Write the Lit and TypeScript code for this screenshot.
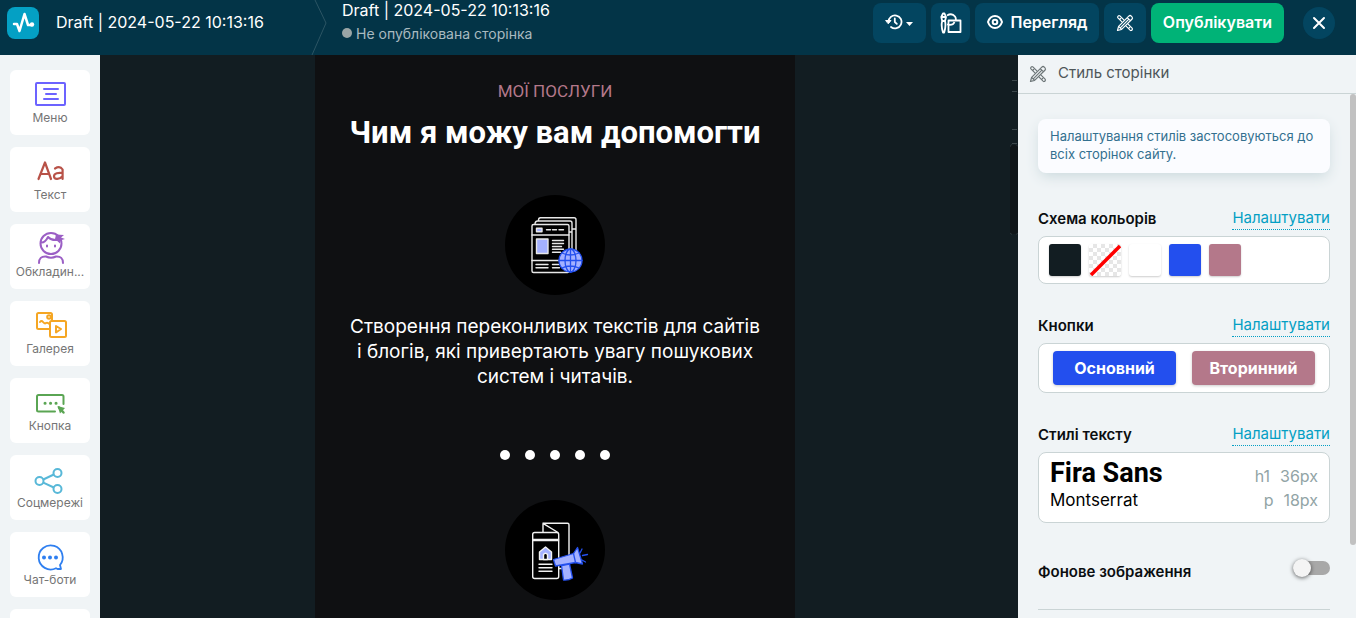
import { LitElement, html, css, svg } from "lit";
import { customElement, property } from "lit/decorators.js";

const toolsIcon = html`<svg width="18" height="18" viewBox="0 0 18 18" fill="none" stroke="currentColor" stroke-width="1.2" stroke-linejoin="round" aria-hidden="true">
  <path d="M6.200 8.100 1.900 3.900Q1.200 3 2.100 2.100T3.900 1.900L8.100 6.200M11.800 9.900l4.300 4.200q.8.900-.1 1.900t-1.900.1L9.900 11.800M3.700 5.500l1.300-1.300M12.700 14.500l1.300-1.300"/>
  <path d="M1.500 16.500 2.600 12.400 12.800 2.100q1.300-1.200 2.500 0l.7.7q1.100 1.200-.1 2.500L5.600 15.400zM11.300 3.700l3 3M2.600 12.400l3 3M4.300 13.800l8.600-8.600"/>
</svg>`;

const icons: Record<string, unknown> = {
  menu: svg`<g fill="none" stroke="#6c63ff" stroke-width="2" stroke-linecap="round"><rect x="5" y="6" width="29" height="22" rx="1" /><path d="M13 12h14M15 17h10M13 22h14"/></g>`,
  text: svg`<g fill="none" stroke="#b85248" stroke-width="2.2" stroke-linecap="round" stroke-linejoin="round"><path d="M7.500 25 14 8.500 20 25M10 20h8M24 14.500q5-3 7.600 1v9.500M31.500 19c-4-.5-8.500 0-8.500 3.200s5 4 8.500 0"/></g>`,
  cover: svg`<g fill="none" stroke="#9b5fc5" stroke-width="2" stroke-linecap="round" stroke-linejoin="round"><circle cx="20" cy="12.500" r="10.500"/><path d="M10 11.500q4 .5 7-5.500 4 4.500 12 2.500M8 32q0-7 7-6.500 5 2.500 10 0 7-.500 7 6.500"/><path d="M16 14.500v1M24 14.500v1"/></g><path d="m25 3.500 8 .500-3 2.500 4 1.500-5 1.500v3L24 8z" fill="#9b5fc5"/>`,
  gallery: svg`<g fill="none" stroke="#f5a623" stroke-width="2" stroke-linejoin="round" stroke-linecap="round"><path d="M18 21H7.500Q6 21 6 19.500V6.500Q6 5 7.500 5h12Q21 5 21 6.500V13M9 14q1.500-2 3 0t3 1 3.500 1"/><circle cx="18" cy="9" r="1.800"/><rect x="19" y="13" width="16" height="16" rx="1.500"/><path d="m25 18 5 3-5 3.500z"/></g>`,
  button: svg`<g fill="none" stroke="#5aa553" stroke-width="2" stroke-linecap="round" stroke-linejoin="round"><path d="M24 26.500H7.500Q6 26.500 6 25V11.500Q6 10 7.500 10h23.500q1.500 0 1.500 1.500V19"/><path d="M14 18.200h.1M19.500 18.200h.1M25 18.200h.1" stroke-width="3"/><path d="m28 22.500 4.500 5" stroke-width="2.500"/></g><path d="m26.500 21 7.500 2-5 5.500z" fill="#5aa553"/>`,
  social: svg`<g fill="none" stroke="#58b8d8" stroke-width="2"><circle cx="8.500" cy="19" r="4"/><circle cx="26.500" cy="11" r="4"/><circle cx="26.500" cy="27" r="4"/><path d="m12.300 17.500 10.500-5M12.300 20.700l10.500 4.800"/></g>`,
  chat: svg`<g fill="none" stroke="#2f7ff0" stroke-width="1.800" stroke-linejoin="round"><path d="M30 30h-3.500l-1.500-.800A12 12 0 1 1 29 26z"/></g><g fill="#2f7ff0"><circle cx="13" cy="18.500" r="2"/><circle cx="19" cy="18.500" r="2"/><circle cx="25" cy="18.500" r="2"/></g>`,
};

const blocks = [
  ["menu", "Меню"],
  ["text", "Текст"],
  ["cover", "Обкладин..."],
  ["gallery", "Галерея"],
  ["button", "Кнопка"],
  ["social", "Соцмережі"],
  ["chat", "Чат-боти"],
  ["", ""],
];

@customElement("top-bar")
class TopBar extends LitElement {
  static styles = css`
    :host { display: flex; align-items: flex-start; height: 55px; background: #033447; color: #fff; font-size: 16px; }
    .logo { display: flex; margin: 7px 17px 0 7px; }
    .title { line-height: 20px; padding-top: 12px; width: 250px; white-space: nowrap; }
    .sep { margin: 0 6px 0 -14px; flex: none; }
    .crumb { flex: 1; line-height: 20px; white-space: nowrap; min-width: 0; }
    .status { display: flex; align-items: center; gap: 4px; font-size: 14px; line-height: 28px; color: #a9bac0; }
    .dot { width: 10px; height: 10px; border-radius: 50%; background: #9aa5a6; margin-bottom: 2px; }
    .actions { display: flex; gap: 5px; padding: 3px 21px 0 0; align-items: center; }
    button { font: inherit; font-weight: 600; color: #fff; border: 0; height: 40px; border-radius: 8px; background: #034560; padding: 0 0 2px; display: flex; align-items: center; justify-content: center; gap: 6px; white-space: nowrap; }
    .history { width: 53px; gap: 2px; }
    .shapes { width: 39px; padding: 0; }
    .preview { width: 124px; }
    .tools { width: 42px; padding: 0; }
    .publish { width: 133px; background: #00b377; }
    .close { width: 32px; height: 32px; border-radius: 50%; margin-left: 14px; padding: 0; }
  `;
  render() {
    return html`
      <a class="logo" href="#" aria-label="Головна"><svg width="32" height="32" viewBox="0 0 32 32"><rect width="32" height="32" rx="8" fill="#04a0c4"/><path d="M7 17h3l2.500 7 5-17 3.500 11h4" fill="none" stroke="#fff" stroke-width="2.500" stroke-linejoin="round" stroke-linecap="round"/><circle cx="25" cy="17.500" r="2.200" fill="#fff"/></svg></a>
      <div class="title">Draft | 2024-05-22 10:13:16</div>
      <svg class="sep" width="44" height="55" viewBox="0 0 44 55"><path d="M23 0 34 23 20 55" fill="none" stroke="#2c5564"/></svg>
      <div class="crumb"><div>Draft | 2024-05-22 10:13:16</div><div class="status"><span class="dot"></span>Не опублікована сторінка</div></div>
      <div class="actions">
        <button class="history" aria-label="Історія"><svg width="18" height="18" viewBox="0 0 18 18" fill="none" stroke="#fff" stroke-width="1.800" stroke-linecap="round" stroke-linejoin="round"><path d="M3.500 9A6.500 6.500 0 1 1 6 14M9.800 5.500V9l2 1.800"/><path d="M1 7.500 6 7.500 3.500 10.500z" fill="#fff" stroke-width="1"/></svg><svg width="9" height="10" viewBox="0 0 9 10"><path d="M1 5h7L4.500 9z" fill="#fff"/></svg></button>
        <button class="shapes" aria-label="Фігури"><svg width="22" height="22" viewBox="0 0 22 22" fill="none" stroke="#fff" stroke-width="1.800" stroke-linejoin="round"><path d="M2.200 9Q.8 14 3 20.500h1.200Q6.200 14 5 9zM2.200 9 1.300 5 3 1.500h1.500L6 5 5 9M2 5h4"/><path d="M7 3.500q5-3 8 1 1 1.500.8 3M7 12.500q6 1.500 7.500-2.500M8.500 8.500h12v11.500h-12z"/></svg></button>
        <button class="preview"><svg width="18" height="16" viewBox="0 0 18 16" fill="none" stroke="#fff" stroke-width="2"><path d="M2 8q2-6 7-6t7 6q-2 6-7 6T2 8z"/><circle cx="9" cy="8" r="2.300"/></svg>Перегляд</button>
        <button class="tools" aria-label="Стиль">${toolsIcon}</button>
        <button class="publish">Опублікувати</button>
        <button class="close" aria-label="Закрити"><svg width="14" height="14" viewBox="0 0 14 14" stroke="#fff" stroke-width="2" stroke-linecap="round"><path d="m2 2 10 10M12 2 2 12"/></svg></button>
      </div>`;
  }
}

@customElement("block-list")
class BlockList extends LitElement {
  static styles = css`
    :host { display: flex; flex-direction: column; gap: 12px; padding: 15px 10px 0; background: #f0f4f6; overflow: hidden; }
    button { flex: none; height: 65px; border: 0; border-radius: 6px; background: #fff; padding: 7px 0 0; font: inherit; font-size: 12px; line-height: 16px; color: #757575; display: flex; flex-direction: column; align-items: center; }
    svg { flex: none; margin-bottom: -3px; }
  `;
  render() {
    return blocks.map(([icon, label]) => html`<button aria-label=${label || "Інше"}><svg width="42" height="36" viewBox="-2 0 42 36">${icons[icon] ?? ""}</svg>${label}</button>`);
  }
}

@customElement("page-canvas")
class PageCanvas extends LitElement {
  static styles = css`
    :host { display: flex; background: #121d22; overflow: hidden; font-family: Roboto, sans-serif; text-align: center; color: #fff; }
    .page { width: 480px; margin: 0 auto; background: #0f1012; display: flex; flex-direction: column; align-items: center; }
    .kicker { margin: 24px 0 0; font-size: 17px; line-height: 24px; font-weight: 400; color: #b4788a; }
    h1 { margin: 10px 0 42px; font-size: 31px; line-height: 40px; font-weight: 700; white-space: nowrap; }
    .copy { margin: 19px 0 61px; font-family: Inter, sans-serif; font-size: 19px; line-height: 25px; white-space: nowrap; }
    .dots { display: flex; gap: 15px; margin-bottom: 40px; }
    .dots span { width: 10px; height: 10px; border-radius: 50%; background: #fff; }
    svg { flex: none; display: block; }
  `;
  render() {
    return html`<main class="page">
      <p class="kicker">МОЇ ПОСЛУГИ</p>
      <h1>Чим я можу вам допомогти</h1>
      <svg width="100" height="100" viewBox="0 0 100 100" fill="none" stroke="#e8e8e8" stroke-width="1.400" stroke-linejoin="round" stroke-linecap="round" aria-hidden="true">
        <circle cx="50" cy="50" r="50" fill="#000" stroke="none"/>
        <path d="M33.500 25q0-2.300 2-2.300h33.500q2 0 2 2V55M68 34h3M30 28.500q.500-2.500 2.500-2.500h32.500q2 0 2 2V54M64 37h3"/>
        <rect x="27" y="29.500" width="37" height="48" rx="1.500" fill="#000"/>
        <path d="M27 40h37M27 65.500h30M41.500 34.700h4M47.500 34.700h4M54 34.700h4.500M47.500 45.500h11M47.500 48.500h11M47.500 51.500h9M47.500 54.300h11M47.500 57.200h8M31 69.500h12M31 72.700h12M47.500 69.500h6M47.500 72.700h7"/>
        <rect x="31.500" y="33.200" width="5.500" height="3.500" fill="#a4b1ff"/><rect x="31.500" y="44" width="11.500" height="14.500" fill="#a4b1ff"/>
        <g stroke="#2450ee" stroke-width="1.300"><circle cx="65.500" cy="65.500" r="11.500" fill="#a4b1ff"/><ellipse cx="65.500" cy="65.500" rx="5.500" ry="11.500"/><path d="M65.500 54v23M54 65.500h23M57 58q8 4 17 0M57 73q8-4 17 0"/></g>
      </svg>
      <p class="copy">Створення переконливих текстів для сайтів<br>і блогів, які привертають увагу пошукових<br>систем і читачів.</p>
      <div class="dots"><span></span><span></span><span></span><span></span><span></span></div>
      <svg width="100" height="100" viewBox="0 0 100 100" fill="none" stroke="#f2f2f2" stroke-width="1.400" stroke-linejoin="round" stroke-linecap="round" aria-hidden="true">
        <circle cx="50" cy="50" r="50" fill="#000" stroke="none"/>
        <path d="M38 32V23.300h24.500q1.500 0 1.500 1.500V67q0 1.500-1.500 1.500H54M38 23.300 53 32.500"/>
        <rect x="27.700" y="32.500" width="26" height="46" rx="2"/><path d="M28 39.500h25.500M28 40.500h25.500M34 64.300h13M34 67.800h13M34 71.300h13"/>
        <path d="M34.500 59.500V52l6-5 6 5v7.500z" fill="#a4b1ff"/><path d="M38.500 59.500v-5q2-2.500 4 0v5z" fill="#000"/>
        <g stroke="#2450ee" stroke-width="1.300" fill="#a4b1ff"><path d="m56.500 65.500 8-1.500 3 14q-4 2.500-9 2z"/><path d="m48.500 59.500 20-6 4-6 5 16.500-7-1.500-20 3.500z"/><path d="m68.500 53.500 2 9" /><path d="m75 53 2-4M77.500 55.500l5-1M77 60l3.500 2" fill="none"/></g>
      </svg>
    </main>
    <svg width="8" height="180" viewBox="0 0 8 180" fill="none" stroke="#3c474b" aria-hidden="true">
      <path d="M2 25.500h5M2 36.500h5M2 74.500h5M2 88.500h5"/><rect y="90" width="8" height="89" rx="2" fill="#0f1518" stroke="none"/><path d="M0 92q0-2 2-2.500M6 89.500l2 2M0 178l2 1.500M8 178l-2 1.500" stroke="#2b3539"/>
    </svg>`;
  }
}

@customElement("style-section")
class StyleSection extends LitElement {
  @property() heading = "";
  static styles = css`
    :host { display: block; margin-bottom: 31px; }
    .row { display: flex; justify-content: space-between; align-items: flex-start; height: 22px; margin-bottom: 6px; }
    h2 { margin: 0; font-size: 15px; line-height: 22px; font-weight: 600; color: #0b0e10; }
    a { font-size: 15px; line-height: 20px; padding-bottom: 1px; color: #049fc4; text-decoration: none; border-bottom: 1px dotted #049fc4; }
    .box { border: 1px solid #cad4d5; border-radius: 8px; background: #fff; }
  `;
  render() {
    return html`<div class="row"><h2>${this.heading}</h2><a href="#">Налаштувати</a></div><div class="box"><slot></slot></div>`;
  }
}

@customElement("style-panel")
class StylePanel extends LitElement {
  static styles = css`
    :host { display: flex; flex-direction: column; background: #f0f4f6; overflow: hidden; }
    .head { display: flex; align-items: center; gap: 11px; flex: none; height: 38px; padding-left: 11px; border-bottom: 1px solid #cad4d5; font-size: 15px; color: #4e5659; }
    .head svg { color: #6d7678; }
    .head span { padding-bottom: 3px; }
    .body { flex: 1; min-height: 0; display: flex; }
    .content { flex: 1; min-width: 0; padding: 25px 20px 0; }
    .track { width: 6px; }
    .thumb { height: 86%; border-radius: 3px; background: #c1c1c1; }
    .note { margin: 0 0 35px; padding: 8px 12px 10px; border-radius: 8px; background: #fbfcff; box-shadow: 0 5px 14px -2px #c9d8dc; font-size: 13px; line-height: 18px; color: #33708f; }
    .swatches { display: flex; gap: 8px; padding: 7px 10px; }
    .swatch { width: 32px; height: 32px; padding: 0; border: 0; border-radius: 3px; box-shadow: 0 1px 2px #0003; overflow: hidden; }
    .dark { background: #121d22; }
    .none { background: repeating-conic-gradient(#e6e6e6 0 25%, #fff 0 50%) 0 0 / 8px 8px; }
    .none svg { display: block; }
    .white { background: #fff; }
    .blue { background: #234fee; }
    .rose { background: #b4788a; }
    .buttons { display: flex; gap: 16px; padding: 7px 14px; }
    .sample { flex: 1; height: 34px; border: 0; border-radius: 4px; color: #fff; font: inherit; font-size: 16px; font-weight: 700; box-shadow: 0 1px 3px #0003; padding: 0; }
    .fonts { padding: 4px 11px 11px; }
    .line { display: flex; justify-content: space-between; align-items: baseline; font-size: 16px; line-height: 21px; }
    .big { font-family: Roboto, sans-serif; font-size: 27px; line-height: 33px; font-weight: 700; }
    .body-font { font-size: 17px; }
    .size { display: flex; gap: 10px; color: #92a4a6; }
    .toggle { display: flex; justify-content: space-between; align-items: center; padding: 6px 0 25px; border-bottom: 1px solid #cad4d5; font-size: 15px; line-height: 24px; font-weight: 600; color: #0b0e10; }
    input { appearance: none; margin: 0 0 8px; width: 37px; height: 14px; border-radius: 7px; background: #a8a8a8; display: flex; align-items: center; }
    input::before { content: ""; width: 18px; height: 18px; border-radius: 50%; background: #f4f4f4; box-shadow: 0 1px 4px #0009; }
  `;
  render() {
    return html`
      <div class="head">${toolsIcon}<span>Стиль сторінки</span></div>
      <div class="body">
        <div class="content">
          <p class="note">Налаштування стилів застосовуються до всіх сторінок сайту.</p>
          <style-section heading="Схема кольорів"><div class="swatches">
            <button class="swatch dark" aria-label="Темний"></button>
            <button class="swatch none" aria-label="Без кольору"><svg width="32" height="32" viewBox="0 0 32 32"><path d="M2 31 31 2" stroke="#f00" stroke-width="3.500"/></svg></button>
            <button class="swatch white" aria-label="Білий"></button>
            <button class="swatch blue" aria-label="Синій"></button>
            <button class="swatch rose" aria-label="Рожевий"></button>
          </div></style-section>
          <style-section heading="Кнопки"><div class="buttons"><button class="sample blue">Основний</button><button class="sample rose">Вторинний</button></div></style-section>
          <style-section heading="Стилі тексту"><div class="fonts">
            <div class="line"><span class="big">Fira Sans</span><span class="size"><span>h1</span><span>36px</span></span></div>
            <div class="line"><span class="body-font">Montserrat</span><span class="size"><span>p</span><span>18px</span></span></div>
          </div></style-section>
          <label class="toggle">Фонове зображення<input type="checkbox" role="switch"></label>
        </div>
        <div class="track"><div class="thumb"></div></div>
      </div>`;
  }
}

@customElement("app-root")
class AppRoot extends LitElement {
  static styles = css`
    :host { display: grid; grid-template: auto minmax(0, 1fr) / 100px minmax(0, 1fr) 338px; height: 100vh; overflow: hidden; font-family: Inter, sans-serif; }
    top-bar { grid-column: 1 / -1; }
  `;
  render() {
    return html`<top-bar></top-bar><block-list></block-list><page-canvas></page-canvas><style-panel></style-panel>`;
  }
}
